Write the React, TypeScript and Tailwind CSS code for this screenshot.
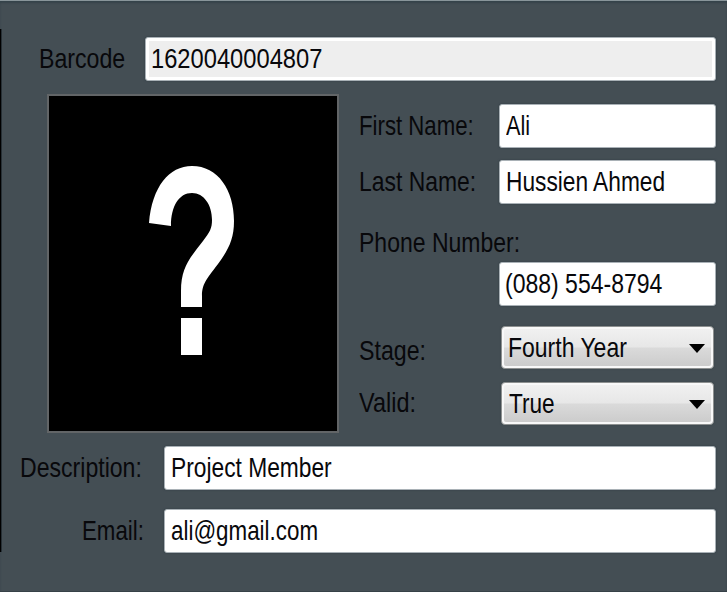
import { useLayoutEffect, useRef, useState } from "react";
import type { ReactNode } from "react";

/* One line of condensed text, squeezed to the width of its box. */
function Fit({ children, className }: { children: string; className: string }) {
  const box = useRef<HTMLDivElement>(null);
  const text = useRef<HTMLSpanElement>(null);
  const [scale, setScale] = useState(0.8);
  useLayoutEffect(() => {
    if (box.current && text.current) {
      setScale(box.current.clientWidth / text.current.offsetWidth);
    }
  }, [children]);
  return (
    <div ref={box} className={`h-7 shrink-0 whitespace-nowrap text-[28px] leading-7 ${className}`}>
      <span ref={text} className="inline-block origin-left" style={{ transform: `scaleX(${scale})` }}>
        {children}
      </span>
    </div>
  );
}

function Field({ children, className }: { children: ReactNode; className: string }) {
  return (
    <div className={`h-11 shrink-0 rounded-[3px] border border-[#a9b1b6] bg-white shadow-[0_0_2px_#303c43] ${className}`}>
      {children}
    </div>
  );
}

function Select({ children }: { children: ReactNode }) {
  return (
    <div className="h-[43px] w-[213px] shrink-0 rounded-[4px] border border-[#8d9090] bg-[#f8f8f8] p-[2px] shadow-[0_0_2px_#39444a]">
      <div className="flex h-full justify-between rounded-[2px] bg-[linear-gradient(#f0f0f0_0%,#e7e7e7_48%,#dadada_52%,#cccccc_100%)] pl-1 pr-[6px]">
        {children}
        <svg viewBox="0 0 16 9" className="mt-[15px] h-[9px] w-4">
          <path d="M0 0H16L8 9Z" fill="black" />
        </svg>
      </div>
    </div>
  );
}

export default function App() {
  return (
    <main className="flex h-[592px] w-[727px] overflow-hidden border-b border-t border-b-[#364147] border-t-[#89959a] bg-[#444e54] font-['Liberation_Sans',Arial,sans-serif] text-[#08080b] shadow-[inset_0_2px_2px_#35434a]">
      <div className="mt-7 h-[523px] w-[2px] shrink-0 border-r border-[#273036] bg-black" />
      <div className="flex grow flex-col pt-9">
        <div className="flex pl-[37px]">
          <Fit className="mt-2 w-[86px]">Barcode</Fit>
          <Field className="ml-5 w-[571px] p-[3px]">
            <div className="flex h-full bg-[#eeeeee] pl-[2px] pt-[4px]">
              <Fit className="w-[171px]">1620040004807</Fit>
            </div>
          </Field>
        </div>

        <div className="mt-[13px] flex pl-[45px]">
          <div className="flex h-[339px] w-[292px] shrink-0 border-2 border-[#626567] bg-black">
            <svg viewBox="0 0 288 335" className="h-full w-full">
              <path
                d="M100 127C103 91 120 70 143 70C169 70 185 94 185 125C185 144 179 154 169 168C157 184 153 188 153 200V211H132V195C132 171 141 162 154 145C161 136 163 132 163 124C163 109 155 97 143 97C130 97 122 110 122 130ZM132 222H153V259H132Z"
                fill="white"
              />
            </svg>
          </div>

          <div className="ml-5 flex flex-col">
            <div className="mt-[10px] flex">
              <Fit className="mt-2 w-[115px]">First Name:</Fit>
              <Field className="ml-[25px] w-[217px] pl-[6px] pt-[7px]">
                <Fit className="w-[24px]">Ali</Fit>
              </Field>
            </div>
            <div className="mt-3 flex">
              <Fit className="mt-2 w-[117px]">Last Name:</Fit>
              <Field className="ml-[23px] w-[217px] pl-[6px] pt-[7px]">
                <Fit className="w-[159px]">Hussien Ahmed</Fit>
              </Field>
            </div>
            <Fit className="mt-[25px] w-[161px]">Phone Number:</Fit>
            <Field className="ml-[140px] mt-[5px] w-[217px] pl-[5px] pt-[7px]">
              <Fit className="w-[157px]">(088) 554-8794</Fit>
            </Field>
            <div className="mt-5 flex">
              <Fit className="mt-[11px] w-[67px]">Stage:</Fit>
              <div className="ml-[75px]">
                <Select>
                  <Fit className="mt-[5px] w-[119px]">Fourth Year</Fit>
                </Select>
              </div>
            </div>
            <div className="mt-[13px] flex">
              <Fit className="mt-[7px] w-[57px]">Valid:</Fit>
              <div className="ml-[85px]">
                <Select>
                  <Fit className="ml-[1px] mt-[5px] w-[46px]">True</Fit>
                </Select>
              </div>
            </div>
          </div>
        </div>

        <div className="mt-[13px] flex pl-[18px]">
          <Fit className="mt-2 w-[122px]">Description:</Fit>
          <Field className="ml-[22px] w-[552px] pl-[6px] pt-[7px]">
            <Fit className="w-[161px]">Project Member</Fit>
          </Field>
        </div>
        <div className="mt-[19px] flex pl-[80px]">
          <Fit className="mt-2 w-[62px]">Email:</Fit>
          <Field className="ml-5 w-[552px] pl-[6px] pt-[7px]">
            <Fit className="w-[147px]">ali@gmail.com</Fit>
          </Field>
        </div>
      </div>
    </main>
  );
}
